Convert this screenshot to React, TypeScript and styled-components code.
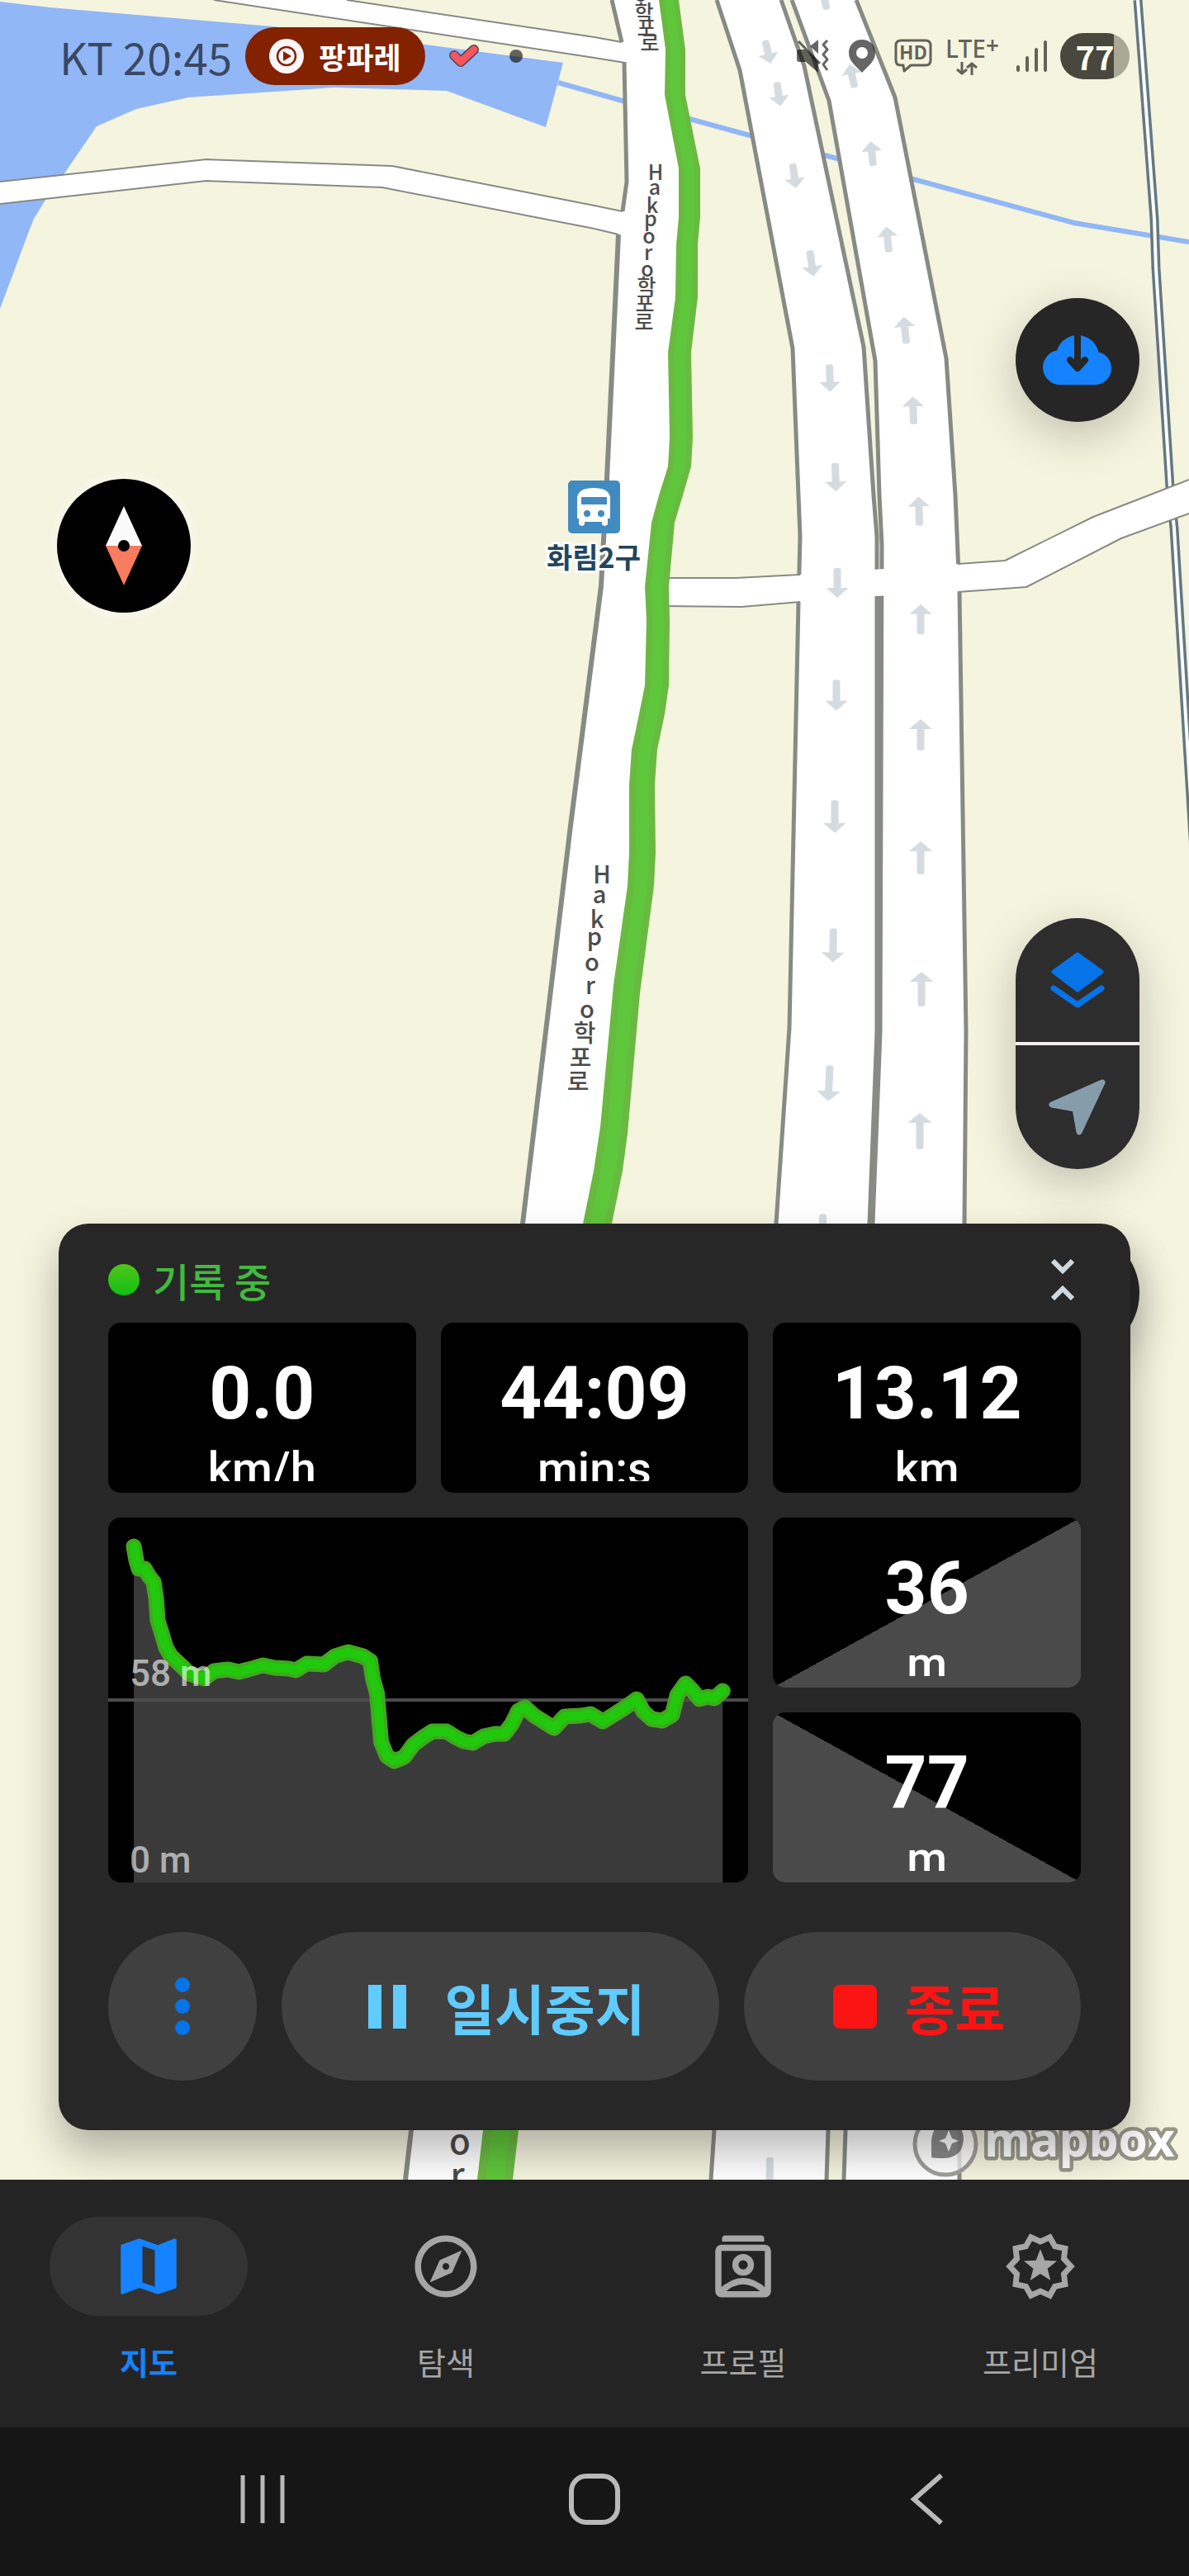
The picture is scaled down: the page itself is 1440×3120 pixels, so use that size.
import React from "react";
import styled, { createGlobalStyle } from "styled-components";

const GlobalStyle = createGlobalStyle`
  *, *::before, *::after { box-sizing: border-box; }
  body {
    margin: 0;
    background: #161616;
    font-family: "Noto Sans CJK KR", "Noto Sans", sans-serif;
  }
  button { border: 0; padding: 0; margin: 0; font: inherit; cursor: pointer; }
  a { color: inherit; text-decoration: none; }
  svg { display: block; }
`;

const color = {
  land: "#f5f4df",
  water: "#91b7f7",
  casing: "#878b85",
  arrow: "#d5dce1",
  surface: "#272727",
  control: "#404040",
  blue: "#0673e8",
  bright: "#1583ff",
  muted: "#a6a6a6",
  status: "rgba(0, 0, 0, 0.6)",
};

const Screen = styled.main`
  display: flex;
  flex-direction: column;
  min-height: 100vh;
`;

const MapArea = styled.section`
  position: relative;
  flex: 1;
  display: flex;
  flex-direction: column;
  justify-content: space-between;
  min-height: 2000px;
  overflow: hidden;
  background: ${color.land};
`;

const MapCanvas = styled.svg`
  position: absolute;
  inset: 0;
  width: 100%;
  height: 100%;
`;

/* ---------- status bar ---------- */

const StatusBar = styled.header`
  position: relative;
  display: flex;
  justify-content: space-between;
  align-items: center;
  height: 136px;
  padding: 0 72px;
  color: ${color.status};
`;

const StatusGroup = styled.div<{ $gap: number }>`
  display: flex;
  align-items: center;
  gap: ${(p) => p.$gap}px;
`;

const Clock = styled.span`
  width: 209px;
  font-size: 53px;
  line-height: 60px;
  white-space: nowrap;
`;

const NowPlaying = styled.div`
  display: flex;
  align-items: center;
  justify-content: center;
  gap: 18px;
  width: 218px;
  height: 70px;
  border-radius: 35px;
  background: #822200;
  color: #fff;
  font-size: 36px;
  font-weight: 700;
  line-height: 44px;
`;

const Network = styled.div`
  display: flex;
  flex-direction: column;
  gap: 2px;
  width: 70px;
  font-family: "Noto Sans", sans-serif;
  font-size: 30px;
  font-weight: 500;
  line-height: 28px;
  white-space: nowrap;

  span { display: flex; }
  b { font-size: 28px; font-weight: 600; line-height: 18px; }
  svg { margin-left: 12px; }
`;

const Battery = styled.span`
  width: 84px;
  height: 56px;
  border-radius: 28px;
  background: linear-gradient(90deg, #48483f 77%, #a9a996 77%);
  color: #fdfdf0;
  font-size: 40px;
  font-weight: 700;
  line-height: 56px;
  text-align: center;
`;

/* ---------- controls over the map ---------- */

const RoundButton = styled.button`
  display: grid;
  place-items: center;
  width: 150px;
  height: 150px;
  border-radius: 50%;
  background: #262626;
  box-shadow: 0 16px 56px rgba(0, 0, 0, 0.22);
`;

const DownloadSlot = styled.div`
  position: absolute;
  top: 361px;
  right: 60px;
`;

const CompassButton = styled.button`
  position: absolute;
  top: 580px;
  left: 69px;
  display: grid;
  place-items: center;
  width: 162px;
  height: 162px;
  border-radius: 50%;
  background: #000;
  box-shadow: 0 0 0 9px rgba(255, 255, 255, 0.22);
`;

const ToolColumn = styled.div`
  position: absolute;
  right: 60px;
  bottom: 999px;
  display: flex;
  flex-direction: column;
  gap: 75px;
`;

const ToolStack = styled.div`
  display: flex;
  flex-direction: column;
  gap: 4px;
  width: 150px;
  border-radius: 75px;
  overflow: hidden;
  background: #f3ecef;
  box-shadow: 0 16px 56px rgba(0, 0, 0, 0.22);
`;

const ToolButton = styled.button`
  display: grid;
  place-items: center;
  height: 150px;
  background: #2d2d2d;
`;

/* ---------- recording card ---------- */

const Card = styled.section`
  position: relative;
  margin: 0 71px 60px;
  padding: 30px 60px 60px;
  border-radius: 36px;
  background: ${color.surface};
  box-shadow: 0 26px 50px rgba(0, 0, 0, 0.28);
`;

const CardHeader = styled.div`
  display: flex;
  align-items: center;
  justify-content: space-between;
  height: 76px;
  margin-bottom: 14px;
`;

const Recording = styled.h1`
  display: flex;
  align-items: center;
  gap: 16px;
  margin: 0;
  color: #42b93f;
  font-size: 48px;
  font-weight: 500;
  line-height: 64px;

  &::before {
    content: "";
    width: 38px;
    height: 38px;
    border-radius: 50%;
    background: linear-gradient(#52c41c, #10c010);
  }
`;

const CollapseButton = styled.button`
  display: grid;
  place-items: center;
  width: 44px;
  height: 50px;
  background: none;
`;

const Stats = styled.div`
  display: grid;
  grid-template-columns: repeat(3, 1fr);
  grid-template-rows: 206px 206px 206px;
  gap: 30px;
  margin-bottom: 60px;
`;

const slope = {
  none: "#000",
  up: "linear-gradient(to bottom right, #000 50%, #4a4a4a 50%)",
  down: "linear-gradient(to bottom left, #000 50%, #4a4a4a 50%)",
};

const Tile = styled.div<{ $slope: keyof typeof slope }>`
  padding: 14px;
  border-radius: 15px;
  background: ${(p) => slope[p.$slope]};
`;

const TileBody = styled.div`
  height: 178px;
  overflow: hidden;
  color: #fff;
  font-family: Roboto, sans-serif;
  text-align: center;
`;

const Value = styled.div`
  font-size: 89px;
  font-weight: 700;
  line-height: 143px;
`;

const Unit = styled.div`
  font-size: 56px;
  font-weight: 500;
  line-height: 40px;
`;

const ChartTile = styled.figure`
  grid-column: 1 / 3;
  grid-row: 2 / 4;
  margin: 0;
  border-radius: 15px;
  overflow: hidden;
  background: #000;
`;

const ChartCanvas = styled.svg`
  width: 100%;
  height: 100%;
  font-family: Roboto, sans-serif;
`;

const Actions = styled.div`
  display: flex;
  gap: 30px;
`;

const actionBase = `
  display: flex;
  align-items: center;
  justify-content: center;
  height: 180px;
  border-radius: 90px;
  background: ${color.control};
`;

const MoreButton = styled.button`
  ${actionBase}
  flex: 0 0 180px;
`;

const Action = styled.button<{ $grow: number; $gap: number; $tone: string }>`
  ${actionBase}
  flex: ${(p) => p.$grow} 1 0;
  gap: ${(p) => p.$gap}px;
  && { padding-left: 16px; }
  color: ${(p) => p.$tone};
  font-size: 66px;
  font-weight: 700;
  line-height: 80px;
  white-space: nowrap;
`;

/* ---------- bottom bars ---------- */

const TabBar = styled.nav`
  display: grid;
  grid-template-columns: repeat(4, 1fr);
  height: 300px;
  padding-top: 45px;
  background: #242424;
`;

const Tab = styled.a<{ $active: boolean }>`
  && { color: ${(p) => (p.$active ? color.bright : color.muted)}; }
  display: flex;
  flex-direction: column;
  align-items: center;
  gap: 30px;
  font-size: 38px;
  font-weight: ${(p) => (p.$active ? 700 : 400)};
  line-height: 50px;
`;

const TabIcon = styled.span<{ $active: boolean }>`
  display: grid;
  place-items: center;
  width: 240px;
  height: 120px;
  border-radius: 60px;
  background: ${(p) => (p.$active ? "#333" : "transparent")};
`;

const SystemBar = styled.footer`
  display: flex;
  justify-content: center;
  align-items: center;
  gap: 302px;
  height: 180px;
  padding-bottom: 6px;
  background: #161616;
`;

const SystemButton = styled.button`
  display: grid;
  place-items: center;
  width: 100px;
  height: 100px;
  background: none;
`;

/* ---------- map drawing ---------- */

type Pt = [number, number];
const pts = (list: Pt[]) => list.map((p) => p.join(",")).join(" ");

const trackLeft: Pt[] = [
  [798, 0], [806, 60], [805, 115], [822, 204], [822, 263], [819, 296], [818, 360], [809, 427],
  [811, 530], [809, 565], [798, 600], [789, 633], [781, 711], [783, 752], [781, 830], [774, 865],
  [765, 908], [762, 950], [762, 1033], [760, 1073], [743, 1193], [727, 1365], [719, 1418],
  [706, 1482], [585, 2580], [578, 2640],
];
const trackRight: Pt[] = [
  [822, 0], [830, 60], [830, 115], [848, 204], [848, 263], [845, 296], [845, 360], [837, 427],
  [839, 530], [837, 565], [827, 600], [817, 633], [810, 711], [811, 752], [810, 830], [805, 865],
  [796, 908], [793, 950], [794, 1033], [792, 1073], [775, 1203], [760, 1373], [754, 1418],
  [741, 1482], [628, 2580], [621, 2640],
];
const mix = (a: Pt, b: Pt, t: number): Pt => [a[0] + (b[0] - a[0]) * t, a[1] + (b[1] - a[1]) * t];
const coreLeft = trackLeft.map((p, i) => mix(p, trackRight[i], 0.25));
const coreRight = trackLeft.map((p, i) => mix(p, trackRight[i], 0.76));
const trackMiddle = trackLeft.map((p, i) => mix(p, trackRight[i], 0.5));

const hakporoEdge: Pt[] = [
  [749, 284], [735, 580], [728, 710], [691, 1000], [633, 1482], [498, 2580], [491, 2640],
];

const southLeft: Pt[] = [
  [868, 0], [896, 85], [960, 422], [967, 600], [969, 650], [967, 730], [956, 1245], [940, 1482],
  [865, 2580], [861, 2640],
];
const southRight: Pt[] = [
  [946, 0], [974, 80], [1046, 420], [1058, 600], [1062, 650], [1062, 1250], [1053, 1482],
  [1003, 2580], [1001, 2640],
];
const northLeft: Pt[] = [
  [959, 0], [1004, 122], [1060, 437], [1065, 600], [1068, 660], [1066, 1250], [1057, 1482],
  [1024, 2580], [1022, 2640],
];
const northRight: Pt[] = [
  [1037, 0], [1084, 118], [1146, 434], [1157, 600], [1162, 717], [1170, 1250], [1168, 1482],
  [1162, 2580], [1162, 2640],
];

/* x, y, tilt, direction (1 = south) */
const laneArrows: [number, number, number, number][] = [
  [930, 63, -13, 1], [943, 114, -9, 1], [962, 213, -8, 1], [983, 319, -8, 1], [1005, 458, -2, 1],
  [1012, 578, -2, 1], [1014, 706, 0, 1], [1013, 842, 0, 1], [1011, 989, 0, 1], [1009, 1145, 1, 1],
  [1004, 1312, 3, 1], [996, 1493, 2, 1], [932, 2642, 1, 1],
  [998, -2, -14, 0], [1032, 92, -12, 0], [1056, 186, -6, 0], [1075, 290, -6, 0], [1096, 400, -6, 0],
  [1106, 497, -2, 0], [1113, 619, -2, 0], [1115, 750, 0, 0], [1115, 890, 0, 0], [1115, 1039, 0, 0],
  [1116, 1198, 0, 0], [1114, 1370, 0, 0],
];

function LaneArrow({ a }: { a: [number, number, number, number] }) {
  const [x, y, tilt, south] = a;
  const h = (28 + Math.max(0, y) * 0.0115) / 2;
  const w = (24 + Math.max(0, y) * 0.004) / 2;
  return (
    <g transform={`translate(${x} ${y}) rotate(${tilt + (south ? 0 : 180)})`} fill={color.arrow}>
      <rect x={-4.5} y={-h} width={9} height={h * 2 - 8} rx={3} />
      <polygon points={`${-w},${h - 12} ${w},${h - 12} 0,${h}`} />
    </g>
  );
}

function StreetMap() {
  const edge = { fill: "none", stroke: color.casing, strokeWidth: 5, strokeLinejoin: "round" as const };
  const thin = { ...edge, strokeWidth: 2 };
  return (
    <MapCanvas viewBox="0 0 1440 2640" preserveAspectRatio="xMidYMin slice" role="img" aria-label="지도">
      <polygon
        fill={color.water}
        points="0,2 60,9 330,32 515,54 682,76 661,154 541,110 405,106 228,118 165,132 117,153 78,210 55,242 41,265 35,280 0,374"
      />
      <polyline
        points="676,100 757,123 835,144 908,164 1014,192 1106,217 1301,270 1440,293"
        fill="none" stroke={color.water} strokeWidth={6}
      />

      <polyline points="1378,0 1398,265 1400,325 1417,590 1422,640 1446,1030" fill="none" stroke="#647882" strokeWidth={11} />
      <polyline points="1378,0 1398,265 1400,325 1417,590 1422,640 1446,1030" fill="none" stroke="#fff" strokeWidth={4} />

      <polygon fill="#fff" points="259,0 420,0 720,45 760,52 760,76 720,70" />
      <polyline {...thin} points="420,0 720,45 753,51" />
      <polyline {...thin} points="259,0 720,70 757,76" />
      <polygon fill="#fff" points="0,220 250,193 475,201 720,249 760,257 760,285 720,277 463,227 250,219 0,247" />
      <polyline {...thin} points="0,220 250,193 475,201 720,249 754,256" />
      <polyline {...thin} points="0,247 250,219 463,227 720,277 749,284" />

      <polygon fill="#fff" points={pts([[741, 0], [753, 51], [756, 75], [759, 220], [754, 256], ...hakporoEdge, ...[...trackMiddle].reverse()])} />
      <polyline {...edge} points="741,0 753,51" />
      <polyline {...edge} points="756,75 759,220 754,256" />
      <polyline {...edge} points={pts(hakporoEdge)} strokeWidth={6} />

      <polygon fill="#fff" points={pts([...southLeft, ...[...southRight].reverse()])} />
      <polygon fill="#fff" points={pts([...northLeft, ...[...northRight].reverse()])} />
      <polyline {...edge} points={pts(southLeft)} />
      <polyline {...edge} points={pts(southRight)} />
      <polyline {...edge} points={pts(northLeft)} />
      <polyline {...edge} points={pts(northRight)} />
      <polyline {...edge} points="1065,722 1064,1250 1055,1482" />

      <polygon fill="#fff" points="800,700 891,700 969,696 1160,683 1217,679 1324,626 1391,600 1440,581 1440,622 1358,652 1243,711 1160,717 1060,722 969,729 898,735 800,735" />
      <polyline {...thin} points="800,700 891,700 969,696" />
      <polyline {...thin} points="800,734 898,735 969,729" />
      <polyline {...thin} points="1160,683 1217,679 1324,626 1391,600 1440,581" />
      <polyline {...thin} points="1160,717 1243,711 1358,652 1440,622" />
      {laneArrows.map((a, i) => <LaneArrow key={i} a={a} />)}

      <polygon fill="#6ab941" points={pts([...trackLeft, ...[...trackRight].reverse()])} />
      <polygon fill="#5fc73b" points={pts([...coreLeft, ...[...coreRight].reverse()])} />

      <g fill="#4c4c4c" textAnchor="middle" fontSize={25} fontWeight={500}>
        <text x="776 780 783 787" y="2 24 43 61">o학포로</text>
        <text x="794 793 790 788 786 785 784 783 781 780" y="218 236 258 274 295 315 335 356 377 399">Hakporo학포로</text>
        <text fontSize={29} x="729 726 723 720 717 715 711 708 703 700" y="1070 1094 1124 1145 1176 1204 1233 1262 1292 1321">Hakporo학포로</text>
        <text fontSize={42} x="557 554" y="2609 2650">or</text>
      </g>

      <rect x={688} y={582} width={63} height={64} rx={5} fill="#428bc0" />
      <path fill="#fff" d="M699 602q2-11 20-11q18 0 20 11v26h-3v7q-4 4-7 0v-3h-21v3q-3 4-7 0v-7h-2z" />
      <rect x={704} y={602} width={31} height={9} fill="#428bc0" />
      <circle cx={711} cy={622} r={4} fill="#428bc0" />
      <circle cx={728} cy={622} r={4} fill="#428bc0" />
      <text x={719} y={688} textAnchor="middle" fontSize={34} fontWeight={700} fill="#22455c" stroke="#fff" strokeWidth={6} strokeLinejoin="round" paintOrder="stroke">화림2구</text>

      <g>
        <circle cx={1145} cy={2597} r={37} fill="#fff" fillOpacity={0.75} stroke="#a0a09a" strokeWidth={5} />
        <path fill="#4c4c4c" fillOpacity={0.65} d="M1128 2613v-20q2-22 20-22q19 2 19 20q-1 22-24 23q-10 0-15-1z" />
        <path fill="#fff" d="M1149 2580l4 10 8 3-8 3-4 10-4-10-8-3 8-3z" />
        <text x={1192} y={2612} fontSize={57} fontFamily="Open Sans" fontWeight={700} fill="#fff" stroke="#97978b" strokeWidth={9} strokeLinejoin="round" paintOrder="stroke">mapbox</text>
      </g>
    </MapCanvas>
  );
}

/* ---------- elevation profile ---------- */

const profile: Pt[] = [
  [31, 35], [34, 52], [37, 62], [44, 62], [50, 72], [55, 78], [58, 98], [60, 125], [65, 141], [70, 158],
  [76, 168], [89, 180], [98, 189], [116, 195], [128, 186], [145, 184], [158, 187], [170, 184],
  [187, 179], [201, 182], [218, 183], [227, 185], [240, 177], [261, 178], [274, 168], [290, 163],
  [308, 168], [317, 174], [320, 195], [325, 213], [330, 272], [337, 289], [346, 295], [358, 290],
  [369, 275], [381, 266], [392, 259], [409, 259], [420, 266], [430, 271], [441, 273], [454, 265],
  [468, 262], [479, 262], [488, 250], [496, 234], [504, 230], [515, 240], [539, 255], [552, 241],
  [571, 240], [583, 238], [598, 247], [611, 239], [625, 230], [639, 220], [647, 235], [657, 244],
  [670, 246], [682, 239], [688, 215], [698, 201], [706, 209], [715, 220], [725, 217], [733, 219],
  [743, 210],
];

function ElevationChart() {
  const line = { fill: "none", strokeLinecap: "round" as const, strokeLinejoin: "round" as const };
  return (
    <ChartTile>
      <ChartCanvas viewBox="0 0 774 442" preserveAspectRatio="none" role="img" aria-label="고도">
        <polygon fill="#3a3a3a" points={pts([[31, 442], ...profile, [743, 442]])} />
        <rect x={0} y={219} width={774} height={4} fill="#4d4d4d" />
        <polyline {...line} points={pts(profile)} stroke="#3fa81e" strokeWidth={19} />
        <polyline {...line} points={pts(profile)} stroke="#20c90b" strokeWidth={11} />
        <g fill="#fff" fillOpacity={0.62} fontSize={44} fontWeight={500}>
          <text x={26} y={204}>58 m</text>
          <text x={26} y={430}>0 m</text>
        </g>
      </ChartCanvas>
    </ChartTile>
  );
}

/* ---------- icons ---------- */

const PlayBadge = () => (
  <svg width="42" height="42" viewBox="0 0 42 42">
    <circle cx="21" cy="21" r="21" fill="#fdf6fa" />
    <circle cx="21" cy="21" r="11" fill="none" stroke="#822200" strokeWidth="2.5" />
    <path d="M17 15l10 6-10 6z" fill="#822200" />
  </svg>
);

const CheckMark = () => (
  <svg width="38" height="30" viewBox="0 0 38 30">
    <path d="M7 14L15 22L31 7" fill="none" stroke="#4a4a55" strokeWidth="12" strokeLinecap="round" strokeLinejoin="round" />
    <path d="M7 14L15 22L31 7" fill="none" stroke="#f5565f" strokeWidth="9" strokeLinecap="round" strokeLinejoin="round" />
  </svg>
);

const Dot = () => (
  <svg width="16" height="18" viewBox="0 0 16 18"><circle cx="8" cy="9" r="8" fill="currentColor" /></svg>
);

const MuteVibrate = () => (
  <svg width="40" height="40" viewBox="0 0 40 40" fill="currentColor">
    <path d="M0 15q0-3 3-3h7L26 27v13L11 27H3q-3 0-3-3z" />
    <path d="M16 8L26 0v17z" />
    <path d="M2 2l26 27" stroke="currentColor" strokeWidth="3" />
    <path d="M37 1l-5 5 5 6-5 6 5 6-5 6 5 7" fill="none" stroke="currentColor" strokeWidth="3" strokeLinejoin="round" />
  </svg>
);

const Pin = () => (
  <svg width="34" height="40" viewBox="0 0 34 40">
    <path fill="currentColor" fillRule="evenodd" d="M17 0C7 0 1 7 1 16c0 11 10 17 16 24 6-7 16-13 16-24C33 7 27 0 17 0zm0 9a7 7 0 1 1 0 14 7 7 0 0 1 0-14z" />
  </svg>
);

const HdCall = () => (
  <svg width="46" height="42" viewBox="0 0 46 42">
    <path d="M8 2h30q6 0 6 6v18q0 6-6 6H20l-8 7-1-7H8q-6 0-6-6V8q0-6 6-6z" fill="none" stroke="currentColor" strokeWidth="3" strokeLinejoin="round" />
    <text x="23" y="25" textAnchor="middle" fontSize="23" fontWeight="700" fill="currentColor">HD</text>
  </svg>
);

const DataArrows = () => (
  <svg width="28" height="16" viewBox="0 0 28 16" fill="none" stroke="currentColor" strokeWidth="3">
    <path d="M8 0v14M2 9l6 5 6-5M20 16V2M14 7l6-5 6 5" />
  </svg>
);

const Signal = () => (
  <svg width="37" height="40" viewBox="0 0 37 40" stroke="currentColor" strokeWidth="4" strokeLinecap="round">
    <path d="M2 33v4M13 22v15M24 12v25M35 3v34" />
  </svg>
);

const CloudDownload = () => (
  <svg width="84" height="62" viewBox="0 0 84 62">
    <g fill={color.bright}>
      <circle cx="21" cy="40" r="21" />
      <circle cx="42" cy="27" r="26" />
      <rect x="21" y="30" width="42" height="31" />
      <circle cx="63" cy="41" r="20" />
    </g>
    <path d="M42 -6v46M33 31l9 10 9-10" fill="none" stroke="#262626" strokeWidth="8" strokeLinecap="round" strokeLinejoin="round" />
  </svg>
);

const Needle = () => (
  <svg width="46" height="96" viewBox="0 0 46 96">
    <path d="M23 0l22 48H1z" fill="#fafafa" />
    <path d="M23 96l22-48H1z" fill="#f87c60" />
    <circle cx="23" cy="48" r="7" fill="#000" />
  </svg>
);

const Layers = () => (
  <svg width="66" height="68" viewBox="0 0 66 68" stroke={color.blue} strokeLinejoin="round" strokeLinecap="round">
    <path d="M33 3L62 24L33 46L4 24z" fill={color.blue} strokeWidth="5" />
    <path d="M4 44L33 64L62 44" fill="none" strokeWidth="7" />
  </svg>
);

const Locate = () => (
  <svg width="70" height="70" viewBox="0 0 70 70">
    <path d="M65 5L4 32L32 37L37 65z" fill="#859cab" stroke="#859cab" strokeWidth="7" strokeLinejoin="round" />
  </svg>
);

const Collapse = () => (
  <svg width="28" height="50" viewBox="0 0 28 50" fill="none" stroke="#cdd8e0" strokeWidth="6">
    <path d="M2 2l12 12L26 2M2 48l12-12 12 12" />
  </svg>
);

const MoreDots = () => (
  <svg width="18" height="70" viewBox="0 0 18 70" fill={color.blue}>
    <circle cx="9" cy="9" r="9" /><circle cx="9" cy="35" r="9" /><circle cx="9" cy="61" r="9" />
  </svg>
);

const PauseBars = () => (
  <svg width="46" height="53" viewBox="0 0 46 53" fill="currentColor">
    <rect width="16" height="53" /><rect x="30" width="16" height="53" />
  </svg>
);

const StopSquare = () => (
  <svg width="53" height="53" viewBox="0 0 53 53"><rect width="53" height="53" rx="8" fill="currentColor" /></svg>
);

const MapIcon = () => (
  <svg width="90" height="90" viewBox="0 0 24 24" fill="currentColor">
    <path d="M20.5 3l-.16.03L15 5.1 9 3 3.36 4.9c-.21.07-.36.25-.36.48V20.5c0 .28.22.5.5.5l.16-.03L9 18.9l6 2.1 5.64-1.9c.21-.07.36-.25.36-.48V3.500c0-.28-.22-.5-.5-.5zM14 18.600l-4-1.400V5.400l4 1.400z" fillRule="evenodd" />
  </svg>
);

const ExploreIcon = () => (
  <svg width="90" height="90" viewBox="0 0 24 24" fill="currentColor">
    <path d="M12 2C6.480 2 2 6.480 2 12s4.480 10 10 10 10-4.480 10-10S17.520 2 12 2zm0 18c-4.410 0-8-3.590-8-8s3.590-8 8-8 8 3.590 8 8-3.590 8-8 8zm-5.200-2.800l7.200-3.200 3.200-7.200-7.200 3.200-3.200 7.200zm5.200-6.300c.61 0 1.100.49 1.100 1.100s-.49 1.100-1.100 1.100-1.100-.49-1.100-1.100.49-1.100 1.100-1.100z" />
  </svg>
);

const ProfileIcon = () => (
  <svg width="90" height="90" viewBox="0 0 24 24" fill="none" stroke="currentColor" strokeWidth="2">
    <path d="M5.200 4V3q0-1 1-1h11.600q1 0 1 1v1z" fill="currentColor" stroke="none" />
    <rect x="4" y="6" width="16" height="15" rx="1" />
    <circle cx="12" cy="11.500" r="2.500" />
    <path d="M5 20q7-6.500 14 0" />
  </svg>
);

const ring = (n: number, outer: number, inner: number, start: number): Pt[] =>
  Array.from({ length: n * 2 }, (_, i) => {
    const angle = start + (i * Math.PI) / n;
    const r = i % 2 ? inner : outer;
    return [Math.round((45 + r * Math.cos(angle)) * 10) / 10, Math.round((45 + r * Math.sin(angle)) * 10) / 10];
  });

const PremiumIcon = () => (
  <svg width="90" height="90" viewBox="0 0 90 90">
    <polygon points={pts(ring(10, 37, 30, 0))} fill="none" stroke="currentColor" strokeWidth="7" />
    <polygon points={pts(ring(5, 21, 9, -Math.PI / 2))} fill="currentColor" />
  </svg>
);

/* ---------- data ---------- */

const topStats = [
  { value: "0.0", unit: "km/h" },
  { value: "44:09", unit: "min:s" },
  { value: "13.12", unit: "km" },
];

const tabs = [
  { label: "지도", href: "#map", Icon: MapIcon },
  { label: "탐색", href: "#explore", Icon: ExploreIcon },
  { label: "프로필", href: "#profile", Icon: ProfileIcon },
  { label: "프리미엄", href: "#premium", Icon: PremiumIcon },
];

function Stat({ value, unit, trend = "none" }: { value: string; unit: string; trend?: keyof typeof slope }) {
  return (
    <Tile $slope={trend}>
      <TileBody>
        <Value>{value}</Value>
        <Unit>{unit}</Unit>
      </TileBody>
    </Tile>
  );
}

export default function App() {
  return (
    <Screen>
      <GlobalStyle />
      <MapArea>
        <StreetMap />
        <StatusBar>
          <StatusGroup $gap={16}>
            <Clock>KT 20:45</Clock>
            <NowPlaying><PlayBadge />팡파레</NowPlaying>
            <StatusGroup $gap={36}>
              <StatusGroup $gap={12}><span /><CheckMark /></StatusGroup>
              <Dot />
            </StatusGroup>
          </StatusGroup>
          <StatusGroup $gap={16}>
            <StatusGroup $gap={22}>
              <MuteVibrate />
              <Pin />
              <HdCall />
            </StatusGroup>
            <Network>
              <span>LTE<b>+</b></span>
              <DataArrows />
            </Network>
            <Signal />
            <Battery>77</Battery>
          </StatusGroup>
        </StatusBar>

        <DownloadSlot>
          <RoundButton aria-label="다운로드"><CloudDownload /></RoundButton>
        </DownloadSlot>
        <CompassButton aria-label="나침반"><Needle /></CompassButton>
        <ToolColumn>
          <ToolStack>
            <ToolButton aria-label="레이어"><Layers /></ToolButton>
            <ToolButton aria-label="현재 위치"><Locate /></ToolButton>
          </ToolStack>
          <RoundButton aria-label="추가" />
        </ToolColumn>

        <Card>
          <CardHeader>
            <Recording>기록 중</Recording>
            <CollapseButton aria-label="접기"><Collapse /></CollapseButton>
          </CardHeader>
          <Stats>
            {topStats.map((s) => <Stat key={s.unit} {...s} />)}
            <ElevationChart />
            <Stat value="36" unit="m" trend="up" />
            <Stat value="77" unit="m" trend="down" />
          </Stats>
          <Actions>
            <MoreButton aria-label="더보기"><MoreDots /></MoreButton>
            <Action $grow={532} $gap={46} $tone="#5fcbff"><PauseBars />일시중지</Action>
            <Action $grow={406} $gap={34} $tone="#fb1414"><StopSquare />종료</Action>
          </Actions>
        </Card>
      </MapArea>

      <TabBar>
        {tabs.map(({ label, href, Icon }, i) => (
          <Tab key={label} href={href} $active={i === 0}>
            <TabIcon $active={i === 0}><Icon /></TabIcon>
            {label}
          </Tab>
        ))}
      </TabBar>

      <SystemBar>
        <SystemButton aria-label="최근 앱">
          <svg width="54" height="58" viewBox="0 0 54 58" stroke="#b9b9b9" strokeWidth="5"><path d="M3 0v58M27 0v58M51 0v58" /></svg>
        </SystemButton>
        <SystemButton aria-label="홈">
          <svg width="62" height="62" viewBox="0 0 62 62"><rect x="3" y="3" width="56" height="56" rx="18" fill="none" stroke="#b9b9b9" strokeWidth="6" /></svg>
        </SystemButton>
        <SystemButton aria-label="뒤로">
          <svg width="40" height="62" viewBox="0 0 40 62" fill="none" stroke="#b9b9b9" strokeWidth="6"><path d="M38 2L5 31l33 29" /></svg>
        </SystemButton>
      </SystemBar>
    </Screen>
  );
}
